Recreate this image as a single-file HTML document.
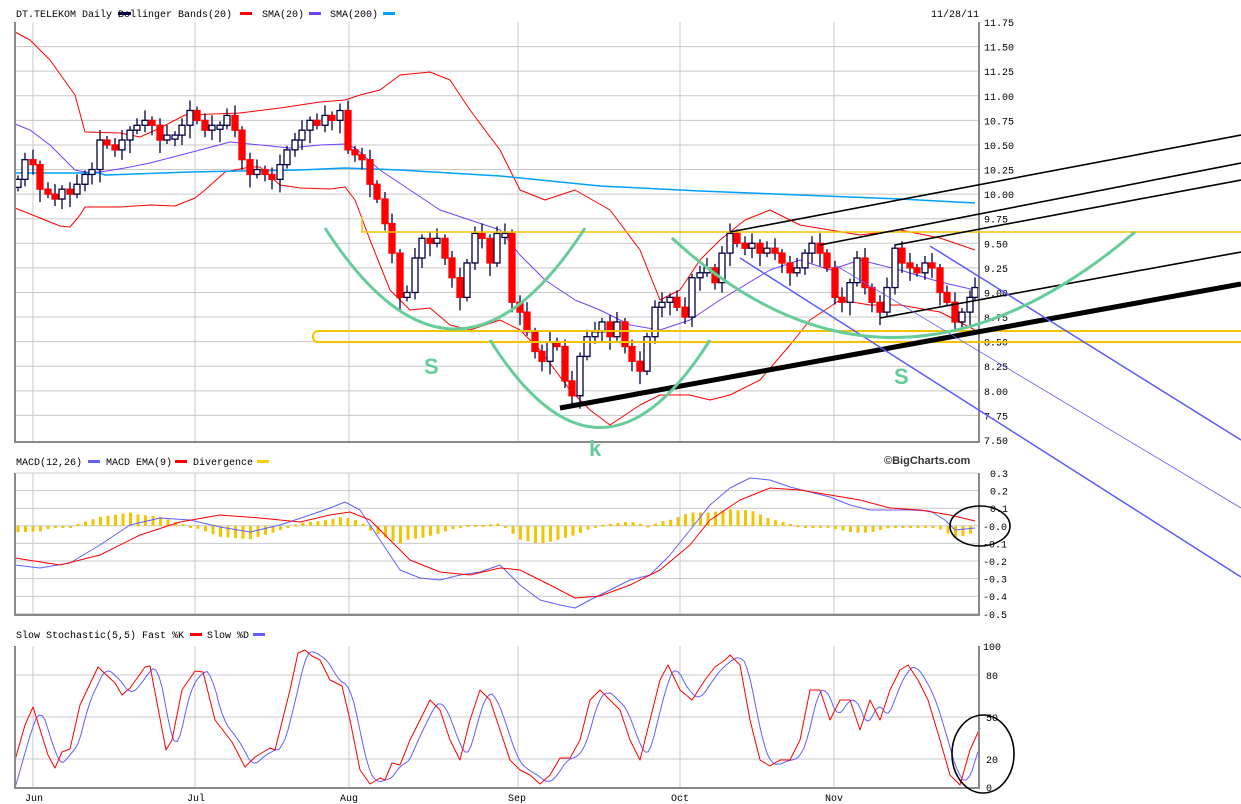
<!DOCTYPE html>
<html><head><meta charset="utf-8"><style>
html,body{margin:0;padding:0;background:#fff;width:1241px;height:804px;overflow:hidden}
svg{display:block}
text{font-family:"Liberation Mono","DejaVu Sans Mono",monospace;font-size:10px;fill:#000}
</style></head><body>
<svg id="s" width="1241" height="804" xmlns="http://www.w3.org/2000/svg">
<g id="grid" stroke="#c8c8c8" stroke-width="1" fill="none"></g>
<g id="main"></g>
<g stroke="#888" stroke-width="2" fill="none">
<polyline points="15,22 15,442 979,442 979,22"/>
<polyline points="15,473 15,615 979,615 979,473"/>
<polyline points="15,646 15,788 979,788 979,646"/>
</g>
<text x="16" y="17">DT.TELEKOM Daily Bollinger Bands(20)</text>
<text x="262" y="17">SMA(20)</text>
<text x="330" y="17">SMA(200)</text>
<rect x="118" y="12" width="13" height="3" fill="#000040"/>
<rect x="240" y="12" width="12" height="3" fill="#ff0000"/>
<rect x="309" y="12" width="12" height="3" fill="#7040ff"/>
<rect x="383" y="12" width="12" height="3" fill="#00a0ff"/>
<text x="931" y="17">11/28/11</text>
<text x="16" y="465">MACD(12,26)</text>
<text x="106" y="465">MACD EMA(9)</text>
<text x="193" y="465">Divergence</text>
<rect x="88" y="460" width="12" height="3" fill="#6060ff"/>
<rect x="175" y="460" width="12" height="3" fill="#ff0000"/>
<rect x="257" y="460" width="12" height="3" fill="#ffcc00"/>
<text x="884" y="464" style="font-family:'Liberation Sans',sans-serif;font-weight:bold;font-size:11px;fill:#333">©BigCharts.com</text>
<text x="16" y="638">Slow Stochastic(5,5) Fast %K</text>
<text x="207" y="638">Slow %D</text>
<rect x="190" y="633" width="12" height="3" fill="#ff0000"/>
<rect x="253" y="633" width="12" height="3" fill="#6060ff"/>
<g id="labels"></g>
<g id="overlay"></g>
</svg>
<script>
(function(){
var NS="http://www.w3.org/2000/svg";
function el(p,t,a){var e=document.createElementNS(NS,t);for(var k in a)e.setAttribute(k,a[k]);p.appendChild(e);return e}
var G=document.getElementById('grid'),M=document.getElementById('main'),L=document.getElementById('labels'),O=document.getElementById('overlay');
function py(p){return 22+(11.75-p)*98.35}
var vx=[33,195,349,518,680,834];
vx.forEach(function(x){el(G,'line',{x1:x,y1:22,x2:x,y2:442});el(G,'line',{x1:x,y1:473,x2:x,y2:615});el(G,'line',{x1:x,y1:646,x2:x,y2:788});});
for(var p=11.5;p>7.6;p-=0.25){var yy=py(p);el(G,'line',{x1:15,y1:yy,x2:979,y2:yy});}
for(var i=0;i<=8;i++){var yy=473+i*17.6;el(G,'line',{x1:15,y1:yy,x2:979,y2:yy});}
[675,717,759].forEach(function(yv){el(G,'line',{x1:15,y1:yv,x2:979,y2:yv})});
for(var p=11.75;p>7.49;p-=0.25){var t=el(L,'text',{x:984,y:py(p)+4});t.textContent=p.toFixed(2);}
var ml=["0.3","0.2","0.1","-0.0","-0.1","-0.2","-0.3","-0.4","-0.5"];
ml.forEach(function(s,i){var t=el(L,'text',{x:s[0]=='-'?983:990,y:473+i*17.6+4});t.textContent=s;});
[["100",983,650],["80",986,679],["50",986,721],["20",986,763],["0",986,791]].forEach(function(a){var t=el(L,'text',{x:a[1],y:a[2]});t.textContent=a[0];});
[["Jun",25],["Jul",187],["Aug",340],["Sep",508],["Oct",671],["Nov",825]].forEach(function(a){var t=el(L,'text',{x:a[1],y:801});t.textContent=a[0];});
function pl(par,pts,col,w){el(par,'polyline',{points:pts.map(function(q){return q.join(',')}).join(' '),fill:'none',stroke:col,'stroke-width':w||1,'stroke-linejoin':'round'});}
pl(M,[[15,32],[30,40],[50,60],[75,95],[85,132],[120,133],[140,137],[160,128],[185,115],[240,113],[280,108],[320,102],[345,100],[360,95],[380,90],[400,75],[430,72],[450,80],[470,110],[500,150],[520,190],[545,200],[575,190],[610,210],[640,250],[660,300],[680,290],[700,260],[720,240],[745,220],[770,210],[800,225],[830,230],[860,235],[900,230],[940,238],[975,250]],'#ff0000');
pl(M,[[15,208],[40,218],[60,226],[70,227],[80,215],[85,207],[120,207],[150,205],[175,206],[195,198],[205,190],[225,172],[250,167],[260,167],[280,185],[300,188],[330,189],[345,187],[355,200],[370,240],[390,290],[410,310],[430,308],[450,325],[470,330],[500,320],[520,330],[540,350],[570,390],[590,410],[610,425],[640,405],[660,395],[690,395],[710,400],[730,395],[760,380],[790,345],[810,320],[840,300],[870,305],[900,305],[940,312],[975,330]],'#ff0000');
pl(M,[[15,124],[30,130],[50,145],[75,170],[85,172],[100,172],[125,168],[150,163],[200,150],[230,142],[250,144],[290,148],[320,145],[345,144],[355,148],[380,170],[410,190],[440,210],[470,220],[500,230],[520,255],[545,280],[575,300],[600,310],[630,325],[660,330],[690,320],[720,300],[745,285],[770,270],[800,260],[830,270],[860,260],[900,270],[940,282],[975,290]],'#7040ff');
pl(M,[[15,173],[100,173],[105,175],[190,172],[240,171],[300,170],[345,168],[400,170],[500,176],[600,186],[700,191],[800,195],[900,199],[975,203]],'#00a0ff',1.5);
var C=[[18,10.15],[25,10.35],[33,10.3],[40,10.05],[48,10.0],[55,9.95],[62,10.05],[70,10.0],[77,10.1],[85,10.2],[92,10.25],[100,10.55],[107,10.5],[115,10.45],[122,10.55],[130,10.65],[137,10.7],[145,10.75],[152,10.7],[160,10.55],[167,10.6],[175,10.6],[182,10.7],[190,10.85],[197,10.75],[205,10.65],[212,10.7],[220,10.7],[227,10.8],[235,10.65],[242,10.35],[250,10.2],[257,10.25],[265,10.2],[272,10.15],[280,10.3],[287,10.45],[295,10.55],[302,10.65],[310,10.75],[317,10.7],[325,10.8],[332,10.75],[340,10.85],[348,10.45],[355,10.4],[362,10.35],[370,10.1],[377,9.95],[385,9.7],[392,9.4],[400,8.95],[407,9.0],[415,9.35],[422,9.55],[430,9.5],[437,9.55],[445,9.35],[452,9.15],[460,8.95],[467,9.3],[475,9.6],[482,9.55],[490,9.3],[497,9.6],[505,9.6],[512,8.9],[520,8.8],[527,8.6],[535,8.4],[542,8.3],[550,8.5],[557,8.45],[565,8.1],[572,7.95],[580,8.35],[587,8.55],[595,8.6],[602,8.7],[610,8.55],[617,8.7],[625,8.45],[632,8.3],[640,8.2],[647,8.55],[655,8.85],[662,8.9],[670,8.95],[677,8.85],[685,8.75],[692,9.15],[700,9.2],[707,9.25],[715,9.1],[722,9.4],[730,9.6],[737,9.5],[745,9.45],[752,9.5],[760,9.4],[767,9.45],[775,9.4],[782,9.3],[790,9.2],[797,9.25],[805,9.4],[812,9.5],[820,9.4],[827,9.25],[835,8.95],[842,8.9],[850,9.1],[857,9.35],[865,9.05],[872,8.9],[880,8.8],[887,9.05],[895,9.45],[902,9.3],[910,9.25],[917,9.2],[925,9.3],[932,9.25],[940,9.0],[947,8.9],[955,8.7],[962,8.8],[970,8.95],[975,9.05]];
for(var i=0;i<C.length;i++){var cx=C[i][0],c=py(C[i][1]),o=i?py(C[i-1][1]):c+8;
 if(Math.abs(o-c)<3){o=c+((i%2)?4:-4);}
 var tp=Math.min(o,c),bt=Math.max(o,c);
 var up=c<o;
 el(M,'line',{x1:cx,y1:tp-4-(i%3)*3,x2:cx,y2:bt+4+(i%4)*3,stroke:'#000040','stroke-width':1.3});
 el(M,'rect',{x:cx-3,y:tp,width:6,height:bt-tp,fill:up?'#fff':'#ff0000',stroke:up?'#000040':'#ff0000','stroke-width':1.3});
}
var Y='#f5c400';
el(O,'polyline',{points:'362,216 362,232 1241,232',fill:'none',stroke:Y,'stroke-width':1.5});
el(O,'rect',{x:313,y:331,width:940,height:11,rx:5,fill:'none',stroke:Y,'stroke-width':2});
el(O,'line',{x1:560,y1:408,x2:1241,y2:284,stroke:'#000','stroke-width':5});
[[730,232,1241,135],[820,245,1241,163],[895,245,1241,180],[880,318,1241,252]].forEach(function(a){el(O,'line',{x1:a[0],y1:a[1],x2:a[2],y2:a[3],stroke:'#000','stroke-width':1.6})});
el(O,'line',{x1:930,y1:246,x2:1241,y2:440,stroke:'#5a5aff','stroke-width':1.5});
el(O,'line',{x1:740,y1:258,x2:1241,y2:577,stroke:'#5a5aff','stroke-width':1.5});
el(O,'line',{x1:835,y1:265,x2:1241,y2:508,stroke:'#5a5aff','stroke-width':0.8});
var g='#66cc99';
el(O,'path',{d:'M325,228 Q455,430 585,228',fill:'none',stroke:g,'stroke-width':3});
el(O,'path',{d:'M490,340 Q600,515 710,340',fill:'none',stroke:g,'stroke-width':3});
el(O,'path',{d:'M672,238 Q890,440 1135,232',fill:'none',stroke:g,'stroke-width':3});
[["S",424,374],["k",589,456],["S",894,384]].forEach(function(a){var t=el(O,'text',{x:a[1],y:a[2],style:'font-family:Liberation Sans,sans-serif;font-weight:bold;font-size:22px;fill:'+g});t.textContent=a[0];});
var B=[[15,565],[40,568],[70,563],[100,545],[130,525],[160,518],[190,520],[220,527],[250,532],[280,525],[310,515],[330,508],[345,502],[360,510],[380,540],[400,570],[420,578],[440,580],[460,575],[480,572],[500,565],[520,585],[540,600],[560,605],[575,608],[590,600],[610,590],[630,580],[650,575],[670,555],[690,530],[710,505],[730,488],[750,478],[770,480],[790,487],[810,492],[830,497],[850,505],[870,510],[890,510],[910,510],[930,511],[945,520],[955,530],[975,528]];
var R=[[15,558],[60,565],[100,555],[140,535],[180,522],[220,515],[260,518],[300,522],[330,515],[350,512],[370,520],[390,540],[410,560],[440,572],[470,575],[500,568],[520,570],[550,585],[575,598],[600,596],[630,585],[660,570],[690,545],[710,520],[740,500],[770,488],[800,490],[830,495],[860,500],[890,508],[920,510],[950,515],[975,521]];
function interp(a,x){for(var i=1;i<a.length;i++){if(x<=a[i][0]){var t=(x-a[i-1][0])/(a[i][0]-a[i-1][0]);return a[i-1][1]+t*(a[i][1]-a[i-1][1]);}}return a[a.length-1][1];}
for(var bx=18;bx<976;bx+=7.5){var d=(interp(R,bx)-interp(B,bx))*0.9;var z=526;
 el(M,'rect',{x:bx-1.5,y:d>0?z-d:z,width:3,height:Math.max(Math.abs(d),2),fill:Y});}
pl(M,B,'#6060ff');pl(M,R,'#ff0000');
el(O,'ellipse',{cx:980,cy:526,rx:30,ry:20,fill:'none',stroke:'#000','stroke-width':1.6});
var K=[[15,760],[25,725],[33,707],[48,755],[55,768],[62,752],[70,749],[80,705],[98,667],[115,683],[122,695],[130,688],[145,667],[150,666],[166,750],[172,740],[182,690],[195,671],[203,672],[215,720],[232,742],[245,767],[255,757],[270,748],[275,750],[290,690],[298,653],[305,650],[312,656],[320,660],[330,680],[342,686],[350,720],[360,770],[370,784],[380,778],[385,780],[392,763],[400,765],[410,740],[420,720],[430,700],[440,710],[450,740],[460,760],[470,720],[480,690],[490,700],[500,730],[510,760],[520,770],[530,775],[540,784],[550,775],[560,758],[570,758],[580,740],[590,700],[600,690],[610,700],[620,710],[630,740],[640,760],[650,720],[660,680],[668,665],[680,690],[692,700],[705,680],[715,667],[725,660],[730,655],[740,665],[750,720],[760,760],[770,766],[780,760],[790,760],[800,740],[810,690],[820,690],[830,720],[840,700],[850,700],[860,730],[870,700],[880,720],[890,690],[900,670],[908,665],[918,680],[928,700],[940,740],[950,775],[960,785],[970,750],[980,728]];
var D=[];for(var sx=15;sx<=978;sx+=3){var v=(interp(K,sx-4)+interp(K,sx-8)+interp(K,sx-12))/3;D.push([sx,v.toFixed(1)]);}
pl(M,D,'#6060ff');pl(M,K,'#ff0000');
el(O,'ellipse',{cx:983,cy:754,rx:31,ry:39,fill:'none',stroke:'#000','stroke-width':1.6});
})();
</script>
</body></html>
